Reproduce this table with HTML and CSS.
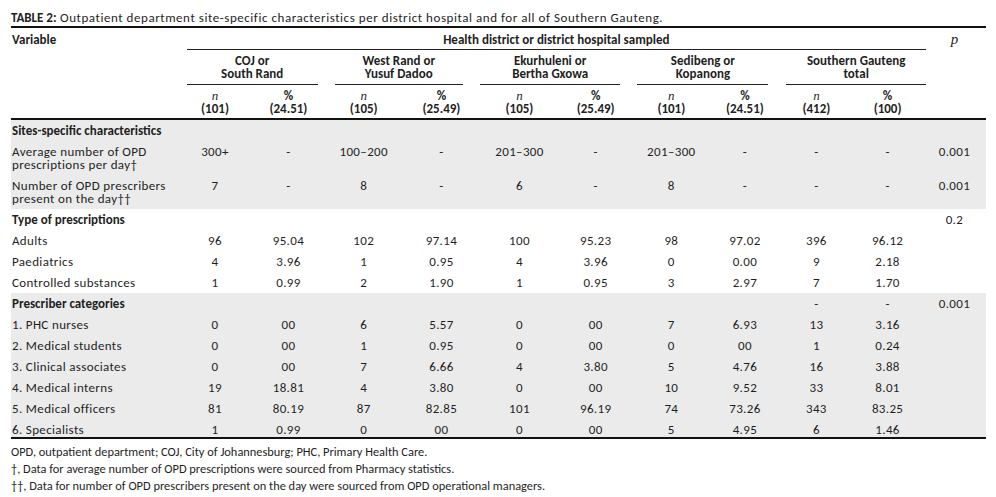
FILE: index.html
```html
<!DOCTYPE html>
<html lang="en">
<head>
<meta charset="utf-8">
<title>Table 2</title>
<link rel="stylesheet" href="styles.css">
</head>
<body>
<div class="page">
  <div class="caption"><b>TABLE 2:</b> Outpatient department site-specific characteristics per district hospital and for all of Southern Gauteng.</div>
  <table class="tbl">
    <colgroup>
      <col class="c-var">
      <col class="c-n1"><col class="c-p1">
      <col class="c-n2"><col class="c-p2">
      <col class="c-n3"><col class="c-p3">
      <col class="c-n4"><col class="c-p4">
      <col class="c-n5"><col class="c-p5">
      <col class="c-pv">
    </colgroup>
    <thead>
      <tr class="h1">
        <th class="left">Variable</th>
        <th colspan="10"><div class="ul ul-all">Health district or district hospital sampled</div></th>
        <th><span class="pv">p</span></th>
      </tr>
      <tr class="h2">
        <th></th>
        <th colspan="2"><div class="ul ul-g1">COJ or<br>South Rand</div></th>
        <th colspan="2"><div class="ul ul-g2">West Rand or<br>Yusuf Dadoo</div></th>
        <th colspan="2"><div class="ul ul-g3">Ekurhuleni or<br>Bertha Gxowa</div></th>
        <th colspan="2"><div class="ul ul-g4">Sedibeng or<br>Kopanong</div></th>
        <th colspan="2"><div class="ul ul-g5">Southern Gauteng<br>total</div></th>
        <th></th>
      </tr>
      <tr class="h3">
        <th></th>
        <th><i class="it">n</i><br>(101)</th><th>%<br>(24.51)</th>
        <th><i class="it">n</i><br>(105)</th><th>%<br>(25.49)</th>
        <th><i class="it">n</i><br>(105)</th><th>%<br>(25.49)</th>
        <th><i class="it">n</i><br>(101)</th><th>%<br>(24.51)</th>
        <th><i class="it">n</i><br>(412)</th><th>%<br>(100)</th>
        <th></th>
      </tr>
    </thead>
    <tbody>
      <tr class="shade sec"><td class="left">Sites-specific characteristics</td><td></td><td></td><td></td><td></td><td></td><td></td><td></td><td></td><td></td><td></td><td></td></tr>
      <tr class="shade"><td class="left">Average number of OPD<br>prescriptions per day†</td><td>300+</td><td>-</td><td>100–200</td><td>-</td><td>201–300</td><td>-</td><td>201–300</td><td>-</td><td>-</td><td>-</td><td>0.001</td></tr>
      <tr class="shade"><td class="left">Number of OPD prescribers<br>present on the day††</td><td>7</td><td>-</td><td>8</td><td>-</td><td>6</td><td>-</td><td>8</td><td>-</td><td>-</td><td>-</td><td>0.001</td></tr>
      <tr class="sec"><td class="left">Type of prescriptions</td><td></td><td></td><td></td><td></td><td></td><td></td><td></td><td></td><td></td><td></td><td class="reg">0.2</td></tr>
      <tr><td class="left">Adults</td><td>96</td><td>95.04</td><td>102</td><td>97.14</td><td>100</td><td>95.23</td><td>98</td><td>97.02</td><td>396</td><td>96.12</td><td></td></tr>
      <tr><td class="left">Paediatrics</td><td>4</td><td>3.96</td><td>1</td><td>0.95</td><td>4</td><td>3.96</td><td>0</td><td>0.00</td><td>9</td><td>2.18</td><td></td></tr>
      <tr><td class="left">Controlled substances</td><td>1</td><td>0.99</td><td>2</td><td>1.90</td><td>1</td><td>0.95</td><td>3</td><td>2.97</td><td>7</td><td>1.70</td><td></td></tr>
      <tr class="shade sec"><td class="left">Prescriber categories</td><td></td><td></td><td></td><td></td><td></td><td></td><td></td><td></td><td class="reg">-</td><td class="reg">-</td><td class="reg">0.001</td></tr>
      <tr class="shade"><td class="left">1. PHC nurses</td><td>0</td><td>00</td><td>6</td><td>5.57</td><td>0</td><td>00</td><td>7</td><td>6.93</td><td>13</td><td>3.16</td><td></td></tr>
      <tr class="shade"><td class="left">2. Medical students</td><td>0</td><td>00</td><td>1</td><td>0.95</td><td>0</td><td>00</td><td>0</td><td>00</td><td>1</td><td>0.24</td><td></td></tr>
      <tr class="shade"><td class="left">3. Clinical associates</td><td>0</td><td>00</td><td>7</td><td>6.66</td><td>4</td><td>3.80</td><td>5</td><td>4.76</td><td>16</td><td>3.88</td><td></td></tr>
      <tr class="shade"><td class="left">4. Medical interns</td><td>19</td><td>18.81</td><td>4</td><td>3.80</td><td>0</td><td>00</td><td>10</td><td>9.52</td><td>33</td><td>8.01</td><td></td></tr>
      <tr class="shade"><td class="left">5. Medical officers</td><td>81</td><td>80.19</td><td>87</td><td>82.85</td><td>101</td><td>96.19</td><td>74</td><td>73.26</td><td>343</td><td>83.25</td><td></td></tr>
      <tr class="shade last"><td class="left">6. Specialists</td><td>1</td><td>0.99</td><td>0</td><td>00</td><td>0</td><td>00</td><td>5</td><td>4.95</td><td>6</td><td>1.46</td><td></td></tr>
    </tbody>
  </table>
  <div class="notes">
    <p>OPD, outpatient department; COJ, City of Johannesburg; PHC, Primary Health Care.</p>
    <p>†, Data for average number of OPD prescriptions were sourced from Pharmacy statistics.</p>
    <p>††, Data for number of OPD prescribers present on the day were sourced from OPD operational managers.</p>
  </div>
</div>
</body>
</html>
```
FILE: styles.css
```css
html, body {
  margin: 0;
  padding: 0;
  background: #ffffff;
}
body {
  font-family: Carlito, Lato, "Open Sans", sans-serif;
  font-size: 13px;
  letter-spacing: 0.35px;
  color: #1f1f1f;
}
.page {
  width: 975px;
  padding: 0 0 0 11px;
}
.caption {
  padding: 10px 0 1px 0;
  line-height: 15px;
  letter-spacing: 0.55px;
  border-bottom: 2px solid #111;
}
.caption b {
  font-weight: 700;
  letter-spacing: 0;
}
.tbl {
  width: 975px;
  table-layout: fixed;
  border-collapse: separate;
  border-spacing: 0;
}
.c-var { width: 167.75px; }
.c-n1 { width: 72.5px; }
.c-p1 { width: 74.35px; }
.c-n2 { width: 76.25px; }
.c-p2 { width: 79.15px; }
.c-n3 { width: 77px; }
.c-p3 { width: 75.35px; }
.c-n4 { width: 76px; }
.c-p4 { width: 71.15px; }
.c-n5 { width: 71.85px; }
.c-p5 { width: 70.5px; }
.c-pv { width: 63.15px; }

th, td {
  padding: 0;
  text-align: center;
  vertical-align: top;
  line-height: 13px;
}
th {
  font-weight: 700;
  letter-spacing: 0;
}
.left {
  text-align: left;
  padding-left: 1px;
}
.h1 th {
  padding-top: 5px;
}
.ul {
  border-bottom: 1px solid #222;
}
.h1 .ul {
  padding-bottom: 3px;
}
.h2 th {
  padding-top: 4px;
}
.h2 .ul {
  padding-bottom: 4px;
}
.h3 th {
  padding-top: 4px;
  padding-bottom: 3px;
  border-bottom: 2px solid #111;
}
.ul-all { margin: 0 -3px 0 8px; }
.ul-g1 { margin: 0 8px 0 8px; }
.ul-g2 { margin: 0 18px 0 9px; }
.ul-g3 { margin: 0 13px 0 -1px; }
.ul-g4 { margin: 0 12px 0 4px; }
.ul-g5 { margin: 0 -3px 0 6px; }

.it {
  font-family: "Liberation Serif", serif;
  font-style: italic;
  font-weight: 400;
  font-size: 13px;
}
.pv {
  font-family: "Liberation Serif", serif;
  font-style: italic;
  font-weight: 400;
  font-size: 15px;
}
td {
  padding-top: 4px;
  padding-bottom: 4px;
}
.shade td {
  background: #ebebeb;
}
.sec td {
  font-weight: 700;
  letter-spacing: 0;
}
.sec td.reg {
  font-weight: 400;
  letter-spacing: 0.35px;
}
.last td {
  border-bottom: 2px solid #111;
  padding-bottom: 1px;
}
.notes {
  padding-top: 4px;
  font-size: 12.4px;
  letter-spacing: 0;
}
.notes p {
  margin: 0;
  line-height: 17px;
}
```
